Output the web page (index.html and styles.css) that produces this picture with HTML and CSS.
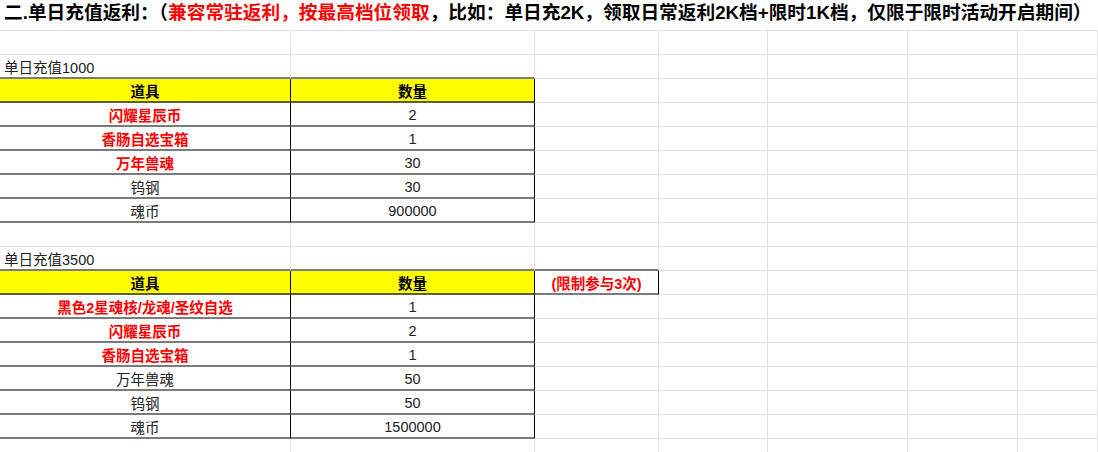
FILE: index.html
```html
<!DOCTYPE html>
<html lang="zh-CN">
<head>
<meta charset="utf-8">
<title>单日充值返利</title>
<link rel="stylesheet" href="styles.css">
</head>
<body>
<div class="sheet">
  <div class="title">二.单日充值返利：（<span class="red">兼容常驻返利，按最高档位领取</span>，比如：单日充2K，领取日常返利2K档+限时1K档，仅限于限时活动开启期间）</div>

  <div class="row"><div class="c"></div><div class="c"></div><div class="c"></div><div class="c"></div><div class="c"></div><div class="c"></div><div class="c"></div></div>

  <div class="row"><div class="c label above">单日充值1000</div><div class="c above"></div><div class="c"></div><div class="c"></div><div class="c"></div><div class="c"></div><div class="c"></div></div>
  <div class="row"><div class="c t head">道具</div><div class="c t head">数量</div><div class="c"></div><div class="c"></div><div class="c"></div><div class="c"></div><div class="c"></div></div>
  <div class="row"><div class="c t hl">闪耀星辰币</div><div class="c t">2</div><div class="c"></div><div class="c"></div><div class="c"></div><div class="c"></div><div class="c"></div></div>
  <div class="row"><div class="c t hl">香肠自选宝箱</div><div class="c t">1</div><div class="c"></div><div class="c"></div><div class="c"></div><div class="c"></div><div class="c"></div></div>
  <div class="row"><div class="c t hl">万年兽魂</div><div class="c t">30</div><div class="c"></div><div class="c"></div><div class="c"></div><div class="c"></div><div class="c"></div></div>
  <div class="row"><div class="c t">钨钢</div><div class="c t">30</div><div class="c"></div><div class="c"></div><div class="c"></div><div class="c"></div><div class="c"></div></div>
  <div class="row"><div class="c t">魂币</div><div class="c t">900000</div><div class="c"></div><div class="c"></div><div class="c"></div><div class="c"></div><div class="c"></div></div>

  <div class="row"><div class="c"></div><div class="c"></div><div class="c"></div><div class="c"></div><div class="c"></div><div class="c"></div><div class="c"></div></div>

  <div class="row"><div class="c label above">单日充值3500</div><div class="c above"></div><div class="c above"></div><div class="c"></div><div class="c"></div><div class="c"></div><div class="c"></div></div>
  <div class="row"><div class="c t head">道具</div><div class="c t head">数量</div><div class="c t note">(限制参与3次)</div><div class="c"></div><div class="c"></div><div class="c"></div><div class="c"></div></div>
  <div class="row"><div class="c t hl">黑色2星魂核/龙魂/圣纹自选</div><div class="c t">1</div><div class="c"></div><div class="c"></div><div class="c"></div><div class="c"></div><div class="c"></div></div>
  <div class="row"><div class="c t hl">闪耀星辰币</div><div class="c t">2</div><div class="c"></div><div class="c"></div><div class="c"></div><div class="c"></div><div class="c"></div></div>
  <div class="row"><div class="c t hl">香肠自选宝箱</div><div class="c t">1</div><div class="c"></div><div class="c"></div><div class="c"></div><div class="c"></div><div class="c"></div></div>
  <div class="row"><div class="c t">万年兽魂</div><div class="c t">50</div><div class="c"></div><div class="c"></div><div class="c"></div><div class="c"></div><div class="c"></div></div>
  <div class="row"><div class="c t">钨钢</div><div class="c t">50</div><div class="c"></div><div class="c"></div><div class="c"></div><div class="c"></div><div class="c"></div></div>
  <div class="row"><div class="c t">魂币</div><div class="c t">1500000</div><div class="c"></div><div class="c"></div><div class="c"></div><div class="c"></div><div class="c"></div></div>

  <div class="row"><div class="c"></div><div class="c"></div><div class="c"></div><div class="c"></div><div class="c"></div><div class="c"></div><div class="c"></div></div>
</div>
</body>
</html>
```

FILE: styles.css
```css
html, body {
  margin: 0;
  padding: 0;
  background: #ffffff;
}

body {
  font-family: "Liberation Sans", "Noto Sans CJK SC", sans-serif;
  color: #222222;
  overflow: hidden;
}

.sheet {
  width: 1098px;
  height: 452px;
  overflow: hidden;
}

.title {
  box-sizing: border-box;
  height: 31px;
  padding: 1px 0 0 4px;
  border-bottom: 1px solid #e3e3e6;
  font-size: 18.7px;
  font-weight: bold;
  line-height: 24px;
  color: #000000;
  white-space: nowrap;
}

.red {
  color: #ff0000;
}

.row {
  display: grid;
  grid-template-columns: 291px 244px 124px 109px 140px 110px 1fr;
  height: 24px;
}

.c {
  box-sizing: border-box;
  height: 24px;
  border-right: 1px solid #e3e3e6;
  border-bottom: 1px solid #e3e3e6;
  display: flex;
  align-items: center;
  justify-content: center;
  font-size: 14.5px;
  white-space: nowrap;
  padding-top: 1px;
}

.label {
  justify-content: flex-start;
  padding-left: 4px;
}

.above {
  border-bottom: 2px solid #7b7b7b;
}

.t {
  border-right: 1px solid #000000;
  border-bottom: 2px solid #7b7b7b;
}

.head {
  background: #ffff00;
  color: #000000;
  font-weight: bold;
  border-bottom-color: #5e5e3a;
}

.hl {
  color: #ff0000;
  font-weight: bold;
}

.note {
  color: #ff0000;
  font-weight: bold;
  font-size: 14.5px;
}
```
